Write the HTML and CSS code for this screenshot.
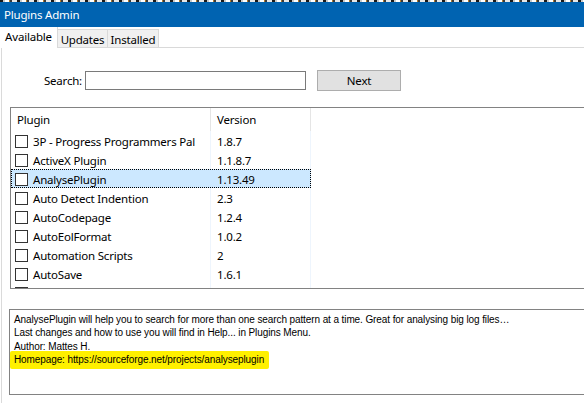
FILE: index.html
```html
<!DOCTYPE html>
<html>
<head>
<meta charset="utf-8">
<link rel="stylesheet" href="styles.css">
</head>
<body>
<div class="noise"></div>
<div class="titlebar">Plugins Admin</div>
<div class="tabs">
  <div class="tab active">Available</div>
  <div class="tab">Updates</div>
  <div class="tab">Installed</div>
</div>
<div class="panel">
  <div class="search-row">
    <label class="search-label">Search:</label>
    <div class="search-input"></div>
    <div class="btn">Next</div>
  </div>
  <div class="list">
    <div class="list-head">
      <div class="col c1">Plugin</div>
      <div class="col c2">Version</div>
      <div class="col c3"></div>
    </div>
    <div class="row"><div class="cells"><div class="col c1"><span class="cb"></span>3P - Progress Programmers Pal</div><div class="col c2">1.8.7</div></div></div>
    <div class="row"><div class="cells"><div class="col c1"><span class="cb"></span>ActiveX Plugin</div><div class="col c2">1.1.8.7</div></div></div>
    <div class="row sel"><div class="cells"><div class="col c1"><span class="cb"></span>AnalysePlugin</div><div class="col c2">1.13.49</div></div></div>
    <div class="row"><div class="cells"><div class="col c1"><span class="cb"></span>Auto Detect Indention</div><div class="col c2">2.3</div></div></div>
    <div class="row"><div class="cells"><div class="col c1"><span class="cb"></span>AutoCodepage</div><div class="col c2">1.2.4</div></div></div>
    <div class="row"><div class="cells"><div class="col c1"><span class="cb"></span>AutoEolFormat</div><div class="col c2">1.0.2</div></div></div>
    <div class="row"><div class="cells"><div class="col c1"><span class="cb"></span>Automation Scripts</div><div class="col c2">2</div></div></div>
    <div class="row"><div class="cells"><div class="col c1"><span class="cb"></span>AutoSave</div><div class="col c2">1.6.1</div></div></div>
    <div class="row"><div class="cells"><div class="col c1"><span class="cb"></span></div><div class="col c2"></div></div></div>
  </div>
  <div class="desc">
    <div class="line">AnalysePlugin will help you to search for more than one search pattern at a time. Great for analysing big log files…</div>
    <div class="line">Last changes and how to use you will find in Help... in Plugins Menu.</div>
    <div class="line author">Author: Mattes H.</div>
    <div class="line"><span class="hl">Homepage: https://sourceforge.net/projects/analyseplugin</span></div>
  </div>
</div>
</body>
</html>
```
FILE: styles.css
```css
html, body {
  margin: 0;
  padding: 0;
  width: 584px;
  height: 403px;
  overflow: hidden;
  background: #ffffff;
  font-family: "Noto Sans", "Open Sans", sans-serif;
  font-size: 11.5px;
  letter-spacing: -0.2px;
  color: #000;
}

.noise {
  height: 2px;
  background: repeating-linear-gradient(90deg, #1a1a1a 0 3px, #c9c9c9 3px 5px, #ffffff 5px 9px, #b07a2a 9px 10px, #3a3a3a 10px 12px, #e8e8e8 12px 17px);
}

.titlebar {
  height: 25px;
  background: #0063b1;
  color: #ffffff;
  padding-left: 4px;
  display: flex;
  align-items: center;
}

.tabs {
  display: flex;
  align-items: flex-end;
  height: 20px;
  border-bottom: 1px solid #d9d9d9;
}

.tab {
  box-sizing: border-box;
  height: 18px;
  background: #f0f0f0;
  border: 1px solid #d9d9d9;
  border-bottom: none;
  border-left: none;
  display: flex;
  align-items: center;
  justify-content: center;
  padding-top: 1px;
  white-space: nowrap;
}

.tab:nth-child(2) { width: 50px; }
.tab:nth-child(3) { width: 51px; }

.tab.active {
  width: 58px;
  height: 21px;
  margin-bottom: -1px;
  background: #ffffff;
  border-top: none;
  padding-top: 0;
  padding-bottom: 2px;
}

.panel {
  margin-left: 1px;
  border-left: 1px solid #dadada;
  height: 355px;
  padding-top: 22px;
  box-sizing: border-box;
}

.search-row {
  display: flex;
  align-items: center;
  height: 21px;
  padding-left: 30px;
}

.search-label {
  width: 50px;
  text-align: right;
  margin-right: 3px;
}

.search-input {
  box-sizing: border-box;
  width: 221px;
  height: 19px;
  border: 1px solid #7a7a7a;
  background: #fff;
}

.btn {
  box-sizing: border-box;
  width: 84px;
  height: 21px;
  margin-left: 11px;
  background: #e1e1e1;
  border: 1px solid #adadad;
  display: flex;
  align-items: center;
  justify-content: center;
}

.list {
  box-sizing: border-box;
  margin-top: 16px;
  margin-left: 8px;
  width: 600px;
  height: 182px;
  border: 1px solid #828282;
  overflow: hidden;
}

.list-head {
  display: flex;
  height: 23px;
}

.list-head .col {
  border-right: 1px solid #e5e5e5;
}

.col {
  box-sizing: border-box;
  display: flex;
  align-items: center;
  white-space: nowrap;
  overflow: hidden;
}

.c1 { width: 200px; padding-left: 6px; }
.c2 { width: 100px; padding-left: 6px; }
.c3 { flex: 1; border-right: none !important; }

.row {
  height: 19px;
  display: flex;
}

.cells {
  display: flex;
  width: 300px;
  height: 19px;
  box-sizing: border-box;
}

.row .col {
  border-right: 1px solid #eef5fd;
  padding-top: 1px;
}

.row .c1 { padding-left: 4px; }

.row.sel .cells {
  background: #cce8ff;
  outline: 1px dotted #000;
  outline-offset: -1px;
}

.row.sel .col { border-right-color: transparent; }

.cb {
  box-sizing: border-box;
  width: 13px;
  height: 13px;
  border: 1px solid #333333;
  background: #ffffff;
  margin-right: 5px;
  flex: none;
}

.desc {
  box-sizing: border-box;
  margin-top: 20px;
  margin-left: 7px;
  width: 600px;
  height: 86px;
  border: 1px solid #828282;
  padding: 3px 0 0 4px;
  font-family: "Liberation Sans", Arial, sans-serif;
  font-size: 10px;
  letter-spacing: -0.1px;
  line-height: 13.3px;
  white-space: nowrap;
}

.line.author {
  position: relative;
}

.line.author::after {
  content: "";
  position: absolute;
  left: -4px;
  top: 11px;
  width: 90px;
  height: 3px;
  background: #fff000;
  border-radius: 2px;
  z-index: -1;
}

.hl {
  display: inline-block;
  background: #fff000;
  margin-left: -4px;
  padding: 2px 5px 3px 4px;
  margin-top: -2px;
  border-radius: 2px;
}
```
